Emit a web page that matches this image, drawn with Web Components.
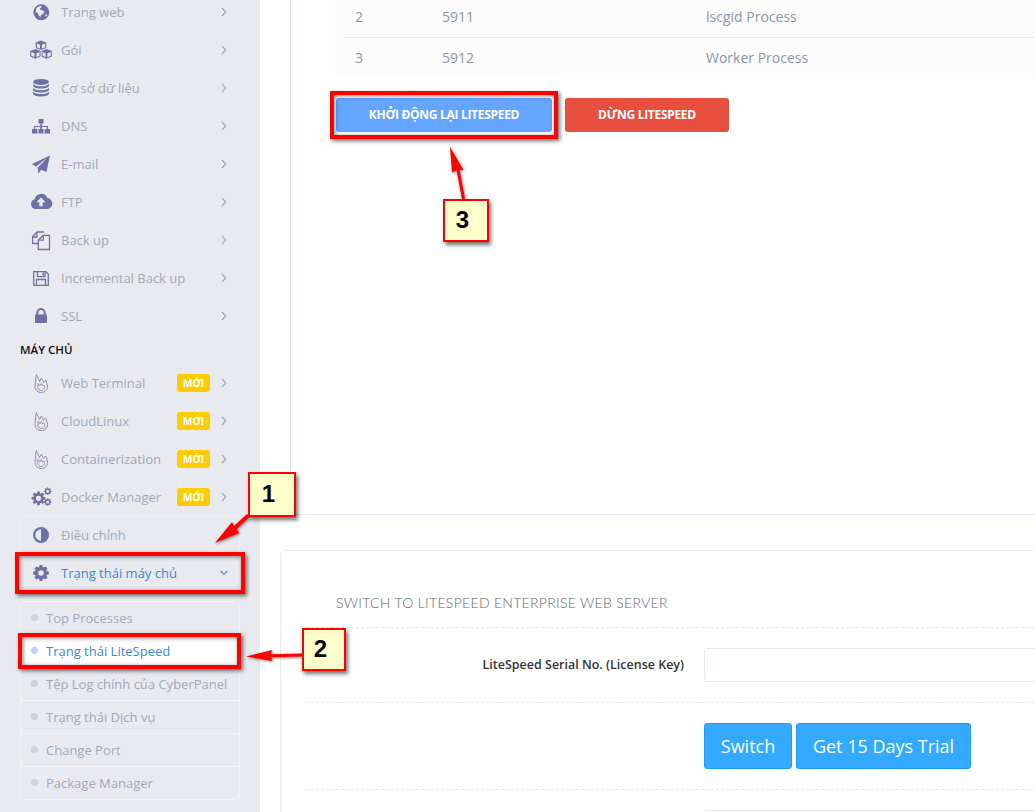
<!DOCTYPE html>
<html lang="vi"><head><meta charset="utf-8"><title>LiteSpeed Status</title>
<style>
html,body{margin:0;padding:0;height:812px;overflow:hidden;background:#fff;font-family:"Open Sans",sans-serif}
</style></head><body>
<cp-app>
  <cp-sidebar slot="side">
    <cp-nav icon="globe">Trang web</cp-nav>
    <cp-nav icon="cubes">Gói</cp-nav>
    <cp-nav icon="db">Cơ sở dữ liệu</cp-nav>
    <cp-nav icon="sitemap">DNS</cp-nav>
    <cp-nav icon="plane">E-mail</cp-nav>
    <cp-nav icon="cloud">FTP</cp-nav>
    <cp-nav icon="files">Back up</cp-nav>
    <cp-nav icon="save">Incremental Back up</cp-nav>
    <cp-nav icon="lock">SSL</cp-nav>
    <cp-heading>MÁY CHỦ</cp-heading>
    <cp-nav icon="fire" badge="MỚI">Web Terminal</cp-nav>
    <cp-nav icon="fire" badge="MỚI">CloudLinux</cp-nav>
    <cp-nav icon="fire" badge="MỚI">Containerization</cp-nav>
    <cp-nav icon="cogs" badge="MỚI">Docker Manager</cp-nav>
    <cp-nav icon="adjust" plain framed>Điều chỉnh</cp-nav>
    <cp-nav icon="gear" open framed>Trạng thái máy chủ</cp-nav>
    <cp-submenu>
      <cp-subitem>Top Processes</cp-subitem>
      <cp-subitem active>Trạng thái LiteSpeed</cp-subitem>
      <cp-subitem>Tệp Log chính của CyberPanel</cp-subitem>
      <cp-subitem>Trạng thái Dịch vụ</cp-subitem>
      <cp-subitem>Change Port</cp-subitem>
      <cp-subitem>Package Manager</cp-subitem>
    </cp-submenu>
  </cp-sidebar>
  <cp-status-panel slot="main"></cp-status-panel>
  <cp-switch-card slot="main"></cp-switch-card>
  <cp-annotations slot="over"></cp-annotations>
</cp-app>
<script>
function gear(cx,cy,R,r,hole,n){
  let d='';const st=Math.PI*2/n;
  for(let k=0;k<n;k++){
    const a=k*st-Math.PI/2;
    const pts=[[r,a-st*.42],[R,a-st*.22],[R,a+st*.22],[r,a+st*.42]];
    pts.forEach((p,j)=>{d+=(k===0&&j===0?'M':'L')+(cx+p[0]*Math.cos(p[1])).toFixed(2)+' '+(cy+p[0]*Math.sin(p[1])).toFixed(2)});
  }
  d+='Z';
  d+=`M${cx-hole} ${cy}a${hole} ${hole} 0 1 0 ${hole*2} 0a${hole} ${hole} 0 1 0 ${-hole*2} 0Z`;
  return d;
}
const LINE='fill="none" stroke="currentColor"';
const ICONS={
globe:'<path fill-rule="evenodd" d="M13.300 5.300a8 8 0 1 0 0 16 8 8 0 0 0 0-16zM8.200 9.500c1.200-1.500 2.800-2.400 4.600-2.500l1 1.300-1.800 1 .6 1.700 2.600.6 1 1.600-1.300 1.800-1.900 1-.6 2.300-1.900-2-.5-2-2.200-1.200z"/><path d="M17 16.500l1.700-1.800.3 1.500-1.300 1.500z" fill="#e9eaf0"/>',
cubes:'<path d="M13 3.500l5.300 2v5.400l-5.300 2.100-5.300-2.100V5.500z"/><path d="M7.500 12l5 2v5.500l-5 2.200-5.300-2.200V14z"/><path d="M18.500 12l5.300 2v5.500l-5.300 2.200-5-2.200V14z"/><path fill="#e9eaf0" d="M13.900 7.700l3.300-1.300v3.800l-3.300 1.400zM8.400 16.200l3.100-1.300v3.900l-3.100 1.400zM19.400 16.200l3.300-1.300v3.900l-3.300 1.400zM8.900 6.500l3.100 1.200v3.900l-3.100-1.300zM3.300 14.900l3.200 1.300v3.900l-3.200-1.300zM14.500 14.900l3.100 1.300v3.900l-3.100-1.300z"/>',
db:'<ellipse cx="13" cy="6.900" rx="8" ry="3"/><path d="M5 9c1.500 1.700 4.500 2.300 8 2.300s6.500-.6 8-2.300v1.600c0 1.800-3.600 3-8 3s-8-1.200-8-3z"/><path d="M5 12.900c1.500 1.700 4.500 2.300 8 2.300s6.500-.6 8-2.300v1.600c0 1.800-3.600 3-8 3s-8-1.200-8-3zM5 16.800c1.500 1.700 4.500 2.300 8 2.300s6.500-.6 8-2.300v1.600c0 1.800-3.600 3-8 3s-8-1.200-8-3z"/>',
sitemap:'<path d="M10.500 6h5v4.600h-1.700V13H20v3h2v4.600h-5.400V16H18.800v-1.900h-5v1.900h1.700v4.600h-5V16h1.700v-1.900H7.200V16h2.200v4.600H4V16h2v-3h6.200v-2.400h-1.700z"/>',
plane:'<path d="M22 4.500l-3.500 16.500-5.300-2.300-2.900 3.800-.7-5.700 9.400-10.100-11 8.800L4 13z"/>',
cloud:'<path fill-rule="evenodd" d="M8 20a5 5 0 0 1-1.300-9.800A6.600 6.600 0 0 1 19.300 9a5.500 5.500 0 0 1-1 11zM13 8.500l-4.600 4.700h2.900v4h3.400v-4h2.900z"/>',
files:`<path ${LINE} stroke-width="1.300" stroke-linejoin="round" d="M15.500 5.700V5H9L4.600 9.800v6.700H10M9 5.200V10H4.600M15.200 8.300h6.300v14.200H10.300V13.200zM15.200 8.300v4.900h-4.900"/>`,
save:`<path ${LINE} stroke-width="1.300" d="M5.700 6.700H18l2.300 2.300v11.300H5.700zM9.500 6.700v4.900H17V6.700M8.500 20.300v-5.800h9v5.800"/><path d="M14.400 7.600h1.500v3h-1.500z"/>`,
lock:`<path d="M7 12.200a.8.8 0 0 1 .8-.8h10.400a.8.8 0 0 1 .8.800V20H7z"/><path ${LINE} stroke-width="2" d="M9.300 12v-2.300a3.700 3.700 0 0 1 7.400 0V12"/>`,
fire:`<g opacity=".8"><path ${LINE} stroke-width="1" stroke-linejoin="round" d="M8.500 4.500C9.200 7.500 10.800 9 11.500 11.500L13.500 8C14 10 15 11 15.500 12.500L17.500 10C18.800 12.500 19.500 14.500 19.500 16.500c0 3.500-2.800 6-6.200 6S7 20 7 16.500C7 14.500 7.300 13.500 7.700 12 7.500 9.500 7.700 6.500 8.500 4.500z"/><path ${LINE} stroke-width=".9" stroke-linejoin="round" d="M10 13.500l1.800 2.500 1.500-2.500 1.500 2.500 1-1c.6 1 .9 1.800.9 2.500 0 1.800-1.600 3-3.400 3s-3.500-1.200-3.500-3c0-1.200.2-2.700.2-4z"/></g>`,
cogs:`<path fill-rule="evenodd" d="${gear(10.500,14.300,7,5,2.600,8)}"/><path fill-rule="evenodd" d="${gear(19.700,7.300,3.800,2.800,1.500,8)}"/><path fill-rule="evenodd" d="${gear(19.700,18,3.800,2.800,1.500,8)}"/>`,
adjust:'<path fill-rule="evenodd" d="M13 5a8 8 0 1 0 0 16 8 8 0 0 0 0-16zm0 2.300v11.400a5.700 5.700 0 0 1 0-11.400z"/>',
gear:`<path fill-rule="evenodd" d="${gear(13,13,8,6,2.800,8)}"/>`
};
function def(name,css,html){
  customElements.define(name,class extends HTMLElement{
    constructor(){super();this.attachShadow({mode:'open'})}
    connectedCallback(){
      this.shadowRoot.innerHTML='<style>'+css+'</style>'+(typeof html==='function'?html(this):html);
    }
  });
}
def('cp-app',`
:host{display:block;position:relative;width:1035px;height:812px;overflow:hidden}
.wrap{display:flex;height:812px}
.side{flex:0 0 260px;background:#e9eaf0;height:812px;overflow:hidden}
.main{flex:1;min-width:0;overflow:hidden;background:#fff}
`,`<div class="wrap"><div class="side"><slot name="side"></slot></div><div class="main"><slot name="main"></slot></div></div><slot name="over"></slot>`);
def('cp-sidebar',`:host{display:block;margin-top:-7px;font-family:"Open Sans",sans-serif}`,`<slot></slot>`);
def('cp-nav',`
:host{display:block;height:38px;margin:0 20px;box-sizing:border-box}
:host([framed]){border:1px solid #eeeff4;border-bottom:none;margin:0 20px;}
:host([framed]) .r{margin:-1px -1px 0}
:host([open]){border-bottom:1px solid #eeeff4;border-top:none}
:host([open]) .r{margin-top:0}
.r{display:flex;align-items:center;height:38px;padding-left:8px;box-sizing:border-box;color:#a0a9b8;font-size:13px}
svg.i{flex:0 0 26px;width:26px;height:26px;fill:#7070a8;color:#7070a8}
.t{margin-left:7px;flex:1;white-space:nowrap}
:host([open]) .t{color:#3a86e4}
.b{width:33px;height:18px;border-radius:3px;background:#ffcc00;color:#fff;font-weight:700;font-size:10px;line-height:18px;text-align:center;margin-right:10px}
svg.c{width:8px;height:10px;margin-right:12px;fill:none;stroke:#a0a9b8;stroke-width:1.200}
:host([open]) svg.c{stroke:#5c8fd0;width:10px;height:8px;margin-right:11px}
`,el=>{
  const ic=ICONS[el.getAttribute('icon')]||'';
  const b=el.getAttribute('badge');
  const chev=el.hasAttribute('plain')?'':(el.hasAttribute('open')?'<svg class="c" viewBox="0 0 10 8"><path d="M1.500 2l3.500 3.500L8.500 2"/></svg>':'<svg class="c" viewBox="0 0 8 10"><path d="M2 1l3.800 4L2 9"/></svg>');
  return `<div class="r"><svg class="i" viewBox="0 0 26 26">${ic}</svg><span class="t"><slot></slot></span>${b?`<span class="b">${b}</span>`:''}${chev}</div>`;
});
def('cp-heading',`:host{display:block;height:29px;margin:0 20px;padding-top:3px;box-sizing:border-box;color:#111;font-size:11.500px;font-weight:600;line-height:24px}`,`<slot></slot>`);
def('cp-submenu',`:host{display:block;margin:9px 20px 0;border:1px solid #f1f2f6;border-radius:4px;overflow:hidden}`,`<slot></slot>`);
def('cp-subitem',`
:host{display:flex;align-items:center;height:33px;box-sizing:border-box;border-top:1px solid #f4f5f8;padding-left:10px;color:#a0a9b8;font-size:13px;white-space:nowrap}
:host(:first-child){border-top:none;height:32px}
:host([active]){background:#fff;color:#3a86e4}
i{width:7px;height:7px;border-radius:50%;background:#cdd2dc;margin-right:8px;position:relative;top:-1px}
:host([active]) i{background:#b5d5f6}
`,`<i></i><slot></slot>`);
def('cp-status-panel',`
:host{display:block;height:515px;margin-left:30px;box-sizing:border-box;border-left:1px solid #dfe8f3;border-bottom:1px solid #dfe8f3;padding-left:44px;overflow:hidden}
.tb{background:#fcfcfd;height:77px;box-sizing:border-box;padding:0 0 0 10px;color:#8d96a6;font-size:14px}
.row{display:grid;grid-template-columns:87px 264px 1fr;height:41px;padding-bottom:2px;box-sizing:border-box;align-items:center;border-top:1px solid #e3e9f2;padding-left:10px}
.row:first-child{border-top:none;height:37px;padding-bottom:5px}
.acts{display:flex;gap:13px;margin:21px 0 0 1px}
button{border:0;height:34px;border-radius:3px;color:#fff;font:700 12px "Open Sans",sans-serif;text-transform:uppercase;padding:0 0 1px;letter-spacing:-.3px}
.a{width:216px;background:#64a5ff}.s{width:164px;background:#e94f3f}
`,`<div class="tb"><div class="row"><span>2</span><span>5911</span><span>lscgid Process</span></div><div class="row"><span>3</span><span>5912</span><span>Worker Process</span></div></div><div class="acts"><button class="a">Khởi động lại LiteSpeed</button><button class="s">Dừng LiteSpeed</button></div>`);
def('cp-switch-card',`
:host{display:block;margin:35px -40px 0 20px;border:1px solid #e6ebf3;border-radius:5px;padding:0 0 0 25px;height:300px;box-sizing:border-box}
h3{margin:0;padding:0 0 0 30px;height:77px;box-sizing:border-box;font:300 14px/104px Lato,sans-serif;color:#666;letter-spacing:.3px;border-bottom:1px dashed #e3e9f2;white-space:nowrap}
.f{display:flex;padding:20px 0;border-bottom:1px dashed #e3e9f2}
label{width:378px;text-align:right;font-size:12.500px;font-weight:600;color:#333;line-height:34px;white-space:nowrap}
input{margin-left:20px;flex:1;height:34px;box-sizing:border-box;border:1px solid #e3e9f2;border-radius:3px;background:#fff;padding:0}
.sp{width:398px}
.b{height:46px;box-sizing:border-box;border:1px solid #1f9bf0;border-radius:3px;background:#33aaff;color:#fff;font:400 18px "Open Sans",sans-serif;padding:0}
.f .b+.b{margin-left:4px}
.nx{margin:20px 0 0 398px;height:30px;border:1px solid #e3e9f2;border-radius:3px}
`,`<h3>SWITCH TO LITESPEED ENTERPRISE WEB SERVER</h3><div class="f"><label>LiteSpeed Serial No. (License Key)</label><input type="text" aria-label="License Key"></div><div class="f"><div class="sp"></div><button class="b" style="width:88px">Switch</button><button class="b" style="width:175px">Get 15 Days Trial</button></div><div class="nx"></div>`);
def('cp-annotations',`
:host{position:absolute;inset:0;display:block;pointer-events:none}
.box{position:absolute;box-sizing:border-box;border:4px solid #f00;box-shadow:2px 2px 4px rgba(0,0,0,.55),inset 1px 1px 4px rgba(0,0,0,.5)}
.n{position:absolute;box-sizing:border-box;border:2px solid #f00;background:#ffc;box-shadow:2px 3px 4px rgba(0,0,0,.55);color:#000;font:700 24px/1 "Liberation Sans",sans-serif;display:flex;align-items:center;justify-content:center;padding:0 7px 2px 0}
svg{position:absolute;left:0;top:0;overflow:visible;filter:drop-shadow(1.500px 1.500px 1.500px rgba(0,0,0,.5))}
`,`
<svg width="1035" height="812" viewBox="0 0 1035 812"><g fill="#f00">
<path d="M215 543L232 522l2 4 13-12 2.500 3-13 12 2.500 4z"/>
<path d="M246 656.500l26-6.500-1 4.200 32-.7v3l-32 .7 1 3.800z"/>
<path d="M450 147l13.500 23-4-.3 5.500 29-3 .6-5.500-29-4.500 2.200z"/>
</g></svg>
<div class="box" style="left:15px;top:552px;width:230px;height:42px"></div>
<div class="box" style="left:18px;top:633px;width:223px;height:36px"></div>
<div class="box" style="left:330px;top:91px;width:228px;height:48px"></div>
<div class="n" style="left:248px;top:472px;width:48px;height:45px">1</div>
<div class="n" style="left:302px;top:628px;width:44px;height:43px">2</div>
<div class="n" style="left:443px;top:199px;width:46px;height:43px">3</div>`);
</script>
</body></html>
